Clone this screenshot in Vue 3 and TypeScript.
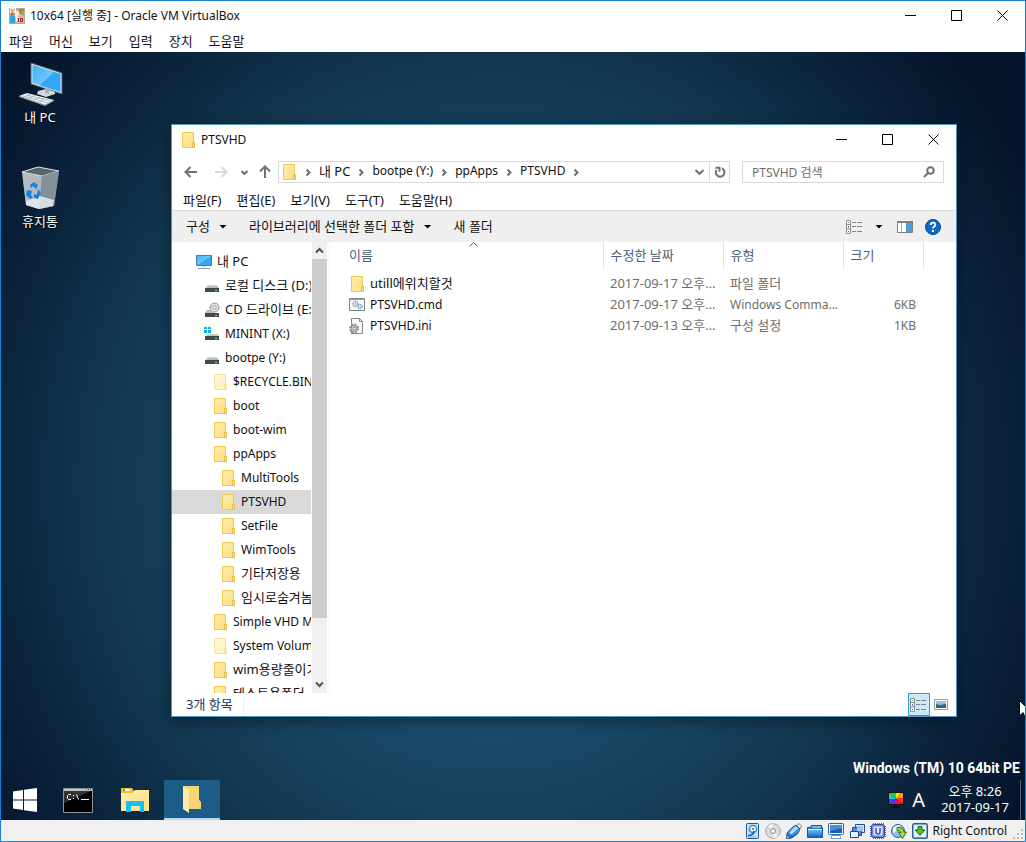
<script setup lang="ts">
import { ref } from 'vue'

interface TreeItem {
  name: string
  icon: string
  level: number
}

interface FileItem {
  name: string
  icon: string
  date: string
  kind: string
  size: string
}

const machineMenu = ['파일', '머신', '보기', '입력', '장치', '도움말']
const explorerMenu = ['파일(F)', '편집(E)', '보기(V)', '도구(T)', '도움말(H)']
const crumbs = ['내 PC', 'bootpe (Y:)', 'ppApps', 'PTSVHD']

const tree: TreeItem[] = [
  { name: '내 PC', icon: 'pc', level: 0 },
  { name: '로컬 디스크 (D:)', icon: 'drive', level: 1 },
  { name: 'CD 드라이브 (E:)', icon: 'cd', level: 1 },
  { name: 'MININT (X:)', icon: 'sysdrive', level: 1 },
  { name: 'bootpe (Y:)', icon: 'drive', level: 1 },
  { name: '$RECYCLE.BIN', icon: 'folder-dim', level: 2 },
  { name: 'boot', icon: 'folder', level: 2 },
  { name: 'boot-wim', icon: 'folder', level: 2 },
  { name: 'ppApps', icon: 'folder', level: 2 },
  { name: 'MultiTools', icon: 'folder', level: 3 },
  { name: 'PTSVHD', icon: 'folder', level: 3 },
  { name: 'SetFile', icon: 'folder', level: 3 },
  { name: 'WimTools', icon: 'folder', level: 3 },
  { name: '기타저장용', icon: 'folder', level: 3 },
  { name: '임시로숨겨놈', icon: 'folder', level: 3 },
  { name: 'Simple VHD Manager', icon: 'folder', level: 2 },
  { name: 'System Volume Information', icon: 'folder-dim', level: 2 },
  { name: 'wim용량줄이기', icon: 'folder', level: 2 },
  { name: '테스트용폴더', icon: 'folder', level: 2 },
]

const files: FileItem[] = [
  { name: 'utill에위치할것', icon: 'folder', date: '2017-09-17 오후 8:20', kind: '파일 폴더', size: '' },
  { name: 'PTSVHD.cmd', icon: 'cmdfile', date: '2017-09-17 오후 8:18', kind: 'Windows Command Script', size: '6KB' },
  { name: 'PTSVHD.ini', icon: 'inifile', date: '2017-09-13 오후 5:02', kind: '구성 설정', size: '1KB' },
]

const devices = ['hdd', 'optical', 'usb', 'shared', 'display', 'windows', 'cpu', 'mouse', 'key']

const selected = ref('PTSVHD')
const query = ref('')

const hasHangul = (text: string): boolean => /[가-힣]/.test(text)
</script>

<template>
  <div class="machine">
    <svg class="defs" width="0" height="0" aria-hidden="true">
      <defs>
        <linearGradient id="g-folder" x1="0" y1="0" x2="1" y2="1">
          <stop offset="0" stop-color="#ffeeb0" /><stop offset="1" stop-color="#ffdf80" />
        </linearGradient>
        <linearGradient id="g-screen" x1="0" y1="0" x2="1" y2="1">
          <stop offset="0" stop-color="#3cb4f4" /><stop offset="0.5" stop-color="#6cc6fb" /><stop offset="0.52" stop-color="#2fa6f2" /><stop offset="1" stop-color="#37abff" />
        </linearGradient>
        <linearGradient id="g-blue" x1="0" y1="0" x2="0" y2="1">
          <stop offset="0" stop-color="#7cc4f4" /><stop offset="1" stop-color="#1667c4" />
        </linearGradient>
        <linearGradient id="g-drive" x1="0" y1="0" x2="0" y2="1">
          <stop offset="0" stop-color="#d5d8da" /><stop offset="1" stop-color="#a4a8ab" />
        </linearGradient>
        <linearGradient id="g-bin" x1="0" y1="0" x2="1" y2="0">
          <stop offset="0" stop-color="#aeb5bb" /><stop offset="0.6" stop-color="#98a1a9" /><stop offset="1" stop-color="#6f7a84" />
        </linearGradient>
        <symbol id="folder" viewBox="0 0 16 16">
          <path d="M2.5.5h11v15h-11z" fill="url(#g-folder)" stroke="#ecc752" />
          <path d="M12.5 10.5h2v5h-2z" fill="#ffe38c" stroke="#e5bb3c" />
        </symbol>
        <symbol id="folder-dim" viewBox="0 0 16 16">
          <g opacity=".5">
            <path d="M2.5.5h11v15h-11z" fill="url(#g-folder)" stroke="#ecc752" />
            <path d="M12.5 10.5h2v5h-2z" fill="#ffe38c" stroke="#e5bb3c" />
          </g>
        </symbol>
        <symbol id="pc" viewBox="0 0 16 16">
          <path d="M.5 1.5h15v10H.5z" fill="url(#g-screen)" stroke="#3f7fae" />
          <path d="M6 12h4v1H6z" fill="#c5ccd1" /><path d="M2 14h12v1H2z" fill="#8899a6" />
        </symbol>
        <symbol id="drive" viewBox="0 0 16 16">
          <path d="M4 7h9l2 4H1z" fill="url(#g-drive)" />
          <rect x="1" y="10" width="14" height="4" fill="#42484c" /><rect x="11" y="12" width="2" height="1" fill="#5dff68" />
        </symbol>
        <symbol id="cd" viewBox="0 0 16 16">
          <circle cx="10.500" cy="5.500" r="4.500" fill="#dfe1e2" stroke="#8f9497" /><circle cx="10.500" cy="5.500" r="1.700" fill="#fff" stroke="#8e9295" />
          <path d="M3 8h4l4 3H1z" fill="#b9bcbe" /><rect x="1" y="11" width="14" height="4" fill="#42484c" /><rect x="11" y="13" width="2" height="1" fill="#5dff68" />
        </symbol>
        <symbol id="sysdrive" viewBox="0 0 16 16">
          <path d="M0 1h3v2H0zM4 1h3v2H4zM0 4h3v3H0zM4 4h3v3H4z" fill="#00b3ef" />
          <path d="M4 8h10l1 3H1z" fill="url(#g-drive)" /><rect x="1" y="10" width="14" height="4" fill="#42484c" /><rect x="11" y="12" width="2" height="1" fill="#5dff68" />
        </symbol>
        <symbol id="cmdfile" viewBox="0 0 16 16">
          <path d="M.5 1.500h15v12H.5z" fill="#f7f8f9" stroke="#7b8288" /><path d="M1 2h14v1H1z" fill="#9aa1a6" />
          <circle cx="6.500" cy="7" r="2.500" fill="none" stroke="#8a949c" stroke-width="1.500" stroke-dasharray="1.200 .6" /><circle cx="6.500" cy="7" r="1" fill="#a3acb3" />
          <circle cx="10.800" cy="9.500" r="2" fill="#d7ebf8" stroke="#71a8cf" stroke-width="1.500" stroke-dasharray="1.200 .5" />
        </symbol>
        <symbol id="inifile" viewBox="0 0 16 16">
          <path d="M2.500.5h8l3 3v12h-11z" fill="#fafafa" stroke="#85898c" /><path d="M10.500.5v3h3" fill="none" stroke="#85898c" />
          <circle cx="5" cy="10.500" r="4" fill="none" stroke="#858c92" stroke-width="2" stroke-dasharray="1.800 1.340" /><circle cx="5" cy="10.500" r="3" fill="#dcdfe1" stroke="#858c92" /><circle cx="5" cy="10.500" r="1.300" fill="#fff" stroke="#858c92" />
        </symbol>
        <symbol id="details" viewBox="0 0 18 14">
          <path d="M.5.5h4v13h-4zM.5 4.500h4M.5 9h4" fill="#fff" stroke="#8c8c8c" />
          <path d="M2 2h1v1H2z" fill="#4b9a4f" /><path d="M2 6h1v2H2z" fill="#418ad6" /><path d="M2 11h1v1H2z" fill="#d43b3b" />
          <path d="M6 2.500h4m1 0h5M6 6.500h4m1 0h5M6 11.500h4m1 0h5" stroke="#858585" />
        </symbol>
        <symbol id="hdd" viewBox="0 0 16 16">
          <rect x="2.500" y=".5" width="12" height="15" rx="1" fill="#c4e1fa" stroke="#205b95" /><circle cx="9" cy="6" r="3.500" fill="#fff" stroke="#3d8bd1" stroke-width="1.500" /><circle cx="9" cy="6" r="1" fill="#1e5fa8" />
          <path d="M4 13l5-2 1-3" fill="none" stroke="#185da8" stroke-width="1.700" /><path d="M4 14h8" stroke="#7bb5e8" />
        </symbol>
        <symbol id="optical" viewBox="0 0 16 16">
          <circle cx="8" cy="8" r="7.300" fill="#dcdcdc" stroke="#a5a5a5" /><path d="M8 8L3 3A7 7 0 0 1 8 1zM8 8l5 5a7 7 0 0 1-5 2z" fill="#f4f4f4" /><circle cx="8" cy="8" r="2.600" fill="#ddd" stroke="#9b9b9b" /><circle cx="8" cy="8" r="1" fill="#fff" />
        </symbol>
        <symbol id="usb" viewBox="0 0 16 16">
          <path d="M10 4l3-3.500L15.500 3 13 7z" fill="#fff" stroke="#6d8094" /><path d="M5.500 5l4.500-3 4 4-2.500 5-6 4-4.500.5L1 10z" fill="url(#g-blue)" stroke="#1c4f8e" /><path d="M3.500 9.500l6-6 2 2-6 6z" fill="#b5dffc" /><path d="M1 12l3 3-3.500.5z" fill="#fff" stroke="#1c4f8e" />
        </symbol>
        <symbol id="shared" viewBox="0 0 16 16">
          <path d="M.5 14.500v-10h2.500l1.500-2h10v2h1v10z" fill="#2d82ce" stroke="#175a9f" /><path d="M1 6h14v8H1z" fill="url(#g-blue)" /><path d="M1 6.500h14M5 4h9" stroke="#d3ecff" />
        </symbol>
        <symbol id="display" viewBox="0 0 16 16">
          <rect x=".5" y=".5" width="15" height="11" rx="1" fill="#e9f4ff" stroke="#2767a5" /><path d="M2 2h12v8H2z" fill="#1f62b2" /><path d="M2 2h12v3L2 8z" fill="#4690dc" /><path d="M4 12.500h8l1 3H3z" fill="#fff" stroke="#8296a9" />
        </symbol>
        <symbol id="windows" viewBox="0 0 16 16">
          <path d="M6.500 1.500h9v8h-9z" fill="#d7e5fb" stroke="#1f4f9b" /><path d="M3.500 4.500h9v8h-9z" fill="#5a86d4" stroke="#1f4f9b" /><path d="M1.500 8.500h8v6h-8z" fill="#e8f2ff" stroke="#1f4f9b" /><path d="M8 3h6v5H8z" fill="#a9c5f4" />
        </symbol>
        <symbol id="cpu" viewBox="0 0 16 16">
          <path d="M3 .7h11M3 15.300h11M.7 3v11M15.300 3v11" stroke="#4b62b8" stroke-width="1.500" stroke-dasharray="1 1" /><rect x="1.500" y="1.500" width="13" height="13" rx="2" fill="#6f86d8" stroke="#31479d" /><rect x="3.500" y="3.500" width="9" height="9" fill="#dfe6ff" /><path d="M6 5v4q0 2 2 2t2-2V5" fill="none" stroke="#3850ad" stroke-width="1.500" />
        </symbol>
        <symbol id="mouse" viewBox="0 0 16 16">
          <circle cx="7" cy="8" r="6.500" fill="#8fbdec" stroke="#2b649f" /><path d="M2 5q4-4 8-2L7 7 2 10z" fill="#e9f5ff" /><path d="M6 4.500q6.500-.5 7 4.500h2.500L11.500 15.500 7.500 9.500H10Q9 7 6 7.500z" fill="#a4d83c" stroke="#2f721d" />
        </symbol>
        <symbol id="key" viewBox="0 0 16 16">
          <rect x=".7" y=".7" width="14.600" height="14.600" rx="1.500" fill="#dcebfa" stroke="#245f96" stroke-width="1.400" /><rect x="3" y="3" width="10" height="10" fill="#f5faff" /><path d="M6 3.500h4V7h3l-5 5.500L3 7h3z" fill="#4fc127" stroke="#176b12" />
        </symbol>
      </defs>
    </svg>

    <header class="machine-title">
      <svg class="app-icon" viewBox="0 0 16 16" aria-hidden="true">
        <path d="M0 0h16v16H0z" fill="#b6aa93" /><path d="M1 0h6v5H1z" fill="#f8f5e9" /><path d="M8 1h7v5H8z" fill="#e5652b" /><path d="M1 8h5v7H1z" fill="#37a6de" /><path d="M6 6l3-5 2 6-4 8z" fill="#f2f2f2" /><path d="M2 5l4 1-4 2z" fill="#e8502d" /><path d="M9 7h6v8H8z" fill="#d8b8a2" /><path d="M12 2l3 1v5l-3-2z" fill="#7dbf42" /><path d="M9.500 10v4M11.500 10.500h2v3h-2z" fill="none" stroke="#a3202a" />
        <path d="M1.500 1.500l2 1 2-1M2 4h3" fill="none" stroke="#777" />
      </svg>
      <span>10x64 [실행 중] - Oracle VM VirtualBox</span>
      <div class="caption-buttons">
        <button type="button" aria-label="최소화"><svg viewBox="0 0 11 11"><path d="M0 5.500h11" /></svg></button>
        <button type="button" aria-label="최대화"><svg viewBox="0 0 11 11"><path d="M.5.5h10v10H.5z" /></svg></button>
        <button type="button" aria-label="닫기"><svg viewBox="0 0 11 11"><path d="M.5.5l10 10M10.500.5l-10 10" /></svg></button>
      </div>
    </header>
    <nav class="machine-menu ko">
      <button v-for="item in machineMenu" :key="item" type="button">{{ item }}</button>
    </nav>

    <main class="desktop">
      <div class="shortcuts ko">
        <button type="button" class="shortcut">
          <svg viewBox="0 0 48 48" aria-hidden="true">
            <path d="M15 3l31 10v21L15 24z" fill="#d9e4ea" stroke="#50626e" /><path d="M16.500 5l28 9v18l-28-9z" fill="url(#g-screen)" /><path d="M22 31l8-2 9 3v2l-9 3-9-3z" fill="#d4dade" /><path d="M29 27l4 1v6l-4-1z" fill="#a9b2b8" /><path d="M3 36l8-3 27 7-9 5z" fill="#edf1f3" /><path d="M3 36l26 9 9-5v1l-9 5L3 37z" fill="#9da7ae" /><path d="M7 36l25 7M10 35l25 6M14 34l-5 3M19 35l-6 4M24 37l-6 3M29 38l-6 4" stroke="#b3bdc3" fill="none" />
          </svg>
          <span>내 PC</span>
        </button>
        <button type="button" class="shortcut">
          <svg viewBox="0 0 48 48" aria-hidden="true">
            <path d="M6 8l16-5 21 4-5 35-15 3-13-4z" fill="url(#g-bin)" /><path d="M6 8l16-5 21 4-17 5z" fill="#59646d" stroke="#dce2e6" /><path d="M6 8l20 4-3 33-13-4z" fill="#c0c6cb" opacity=".55" /><path d="M26 12l17-5-5 35-15 3z" fill="#848f98" /><path d="M10 37l14-5 14 4-1 6-14 3-13-4z" fill="#edf0f2" opacity=".8" />
            <path d="M14 21l4-3 4 3-2 4-3-3-2 2zM11 26l5 1-1 4 2 3-3 1-4-4zM22 25l3 4-3 6-4-1v-4l3 1z" fill="#1681dc" />
          </svg>
          <span>휴지통</span>
        </button>
      </div>

      <section class="explorer">
        <header class="explorer-title">
          <svg class="ico"><use href="#folder" /></svg>
          <span>PTSVHD</span>
          <div class="caption-buttons">
            <button type="button" aria-label="최소화"><svg viewBox="0 0 11 11"><path d="M0 5.500h11" /></svg></button>
            <button type="button" aria-label="최대화"><svg viewBox="0 0 11 11"><path d="M.5.5h10v10H.5z" /></svg></button>
            <button type="button" aria-label="닫기"><svg viewBox="0 0 11 11"><path d="M.5.5l10 10M10.500.5l-10 10" /></svg></button>
          </div>
        </header>

        <div class="nav-row">
          <button type="button" class="nav wide" aria-label="뒤로"><svg width="14" height="12" viewBox="0 0 14 12"><path d="M13 6H2M6.500 1L1.500 6l5 5" /></svg></button>
          <button type="button" class="nav wide off" aria-label="앞으로"><svg width="14" height="12" viewBox="0 0 14 12"><path d="M1 6h11M7.500 1l5 5-5 5" /></svg></button>
          <button type="button" class="nav small" aria-label="최근 위치"><svg width="7" height="5" viewBox="0 0 7 5"><path d="M.5 1l3 3 3-3" /></svg></button>
          <button type="button" class="nav up" aria-label="위로"><svg width="12" height="14" viewBox="0 0 12 14"><path d="M6 13V2M1 6.500l5-5 5 5" /></svg></button>
          <div class="address">
            <svg class="ico"><use href="#folder" /></svg>
            <template v-for="crumb in crumbs" :key="crumb">
              <svg class="sep" viewBox="0 0 22 9"><path d="M9.500 1.500l3 3-3 3" /></svg>
              <button type="button" class="crumb" :class="{ ko: hasHangul(crumb) }">{{ crumb }}</button>
            </template>
            <svg class="sep" viewBox="0 0 22 9"><path d="M9.500 1.500l3 3-3 3" /></svg>
            <button type="button" class="drop" aria-label="이전 위치"><svg width="9" height="6" viewBox="0 0 9 6"><path d="M.5 1l4 4 4-4" /></svg></button>
          </div>
          <button type="button" class="refresh" aria-label="새로 고침"><svg width="12" height="12" viewBox="0 0 12 12"><path d="M8 2.500A4.300 4.300 0 1 1 2.500 4M1.500 1.800h4v4" /></svg></button>
          <label class="search">
            <input v-model="query" type="search" placeholder="PTSVHD 검색" aria-label="PTSVHD 검색" />
            <svg width="12" height="12" viewBox="0 0 12 12"><circle cx="7.500" cy="4.500" r="3.300" /><path d="M5 7L1 11" /></svg>
          </label>
        </div>

        <nav class="explorer-menu ko">
          <button v-for="item in explorerMenu" :key="item" type="button">{{ item }}</button>
        </nav>

        <div class="toolbar ko">
          <button type="button"><span>구성</span><i class="caret" /></button>
          <button type="button"><span>라이브러리에 선택한 폴더 포함</span><i class="caret" /></button>
          <button type="button"><span>새 폴더</span></button>
          <div class="tools">
            <button type="button" class="view-menu" aria-label="보기 변경"><svg width="18" height="14"><use href="#details" /></svg><i class="caret" /></button>
            <button type="button" aria-label="미리 보기 창"><svg width="16" height="12" viewBox="0 0 16 12"><path d="M.5.5h15v11H.5z" fill="#fff" stroke="#808080" /><path d="M0 0h16v2H0z" fill="#808080" /><path d="M9 2h6v9H9z" fill="#43a0e5" /><path d="M4.500 2v9" stroke="#aaa" /></svg></button>
            <button type="button" aria-label="도움말"><svg width="16" height="16" viewBox="0 0 16 16"><circle cx="8" cy="8" r="7.500" fill="#0d68c6" stroke="#06458f" /><path d="M5.800 6q0-2.300 2.200-2.300T10.200 6q0 1-1.200 1.700T8 9.500" fill="none" stroke="#fff" stroke-width="1.800" /><path d="M7 11h2v2H7z" fill="#fff" /></svg></button>
          </div>
        </div>

        <div class="panes">
          <ul class="tree">
            <li v-for="item in tree" :key="item.name">
              <button
                type="button"
                :class="['level-' + item.level, { ko: hasHangul(item.name), selected: selected === item.name }]"
                @click="selected = item.name"
              >
                <svg class="ico"><use :href="'#' + item.icon" /></svg><span>{{ item.name }}</span>
              </button>
            </li>
          </ul>
          <div class="scrollbar" aria-hidden="true">
            <svg viewBox="0 0 9 6"><path d="M1 5l3.500-3.500L8 5" /></svg>
            <div class="track"><div class="thumb" /></div>
            <svg viewBox="0 0 9 6"><path d="M1 1l3.500 3.500L8 1" /></svg>
          </div>
          <div class="list">
            <table>
              <colgroup><col class="c-name" /><col class="c-mid" /><col class="c-mid" /><col class="c-size" /><col /></colgroup>
              <thead class="ko">
                <tr>
                  <th>이름<svg class="sort" viewBox="0 0 9 5"><path d="M.5 4.500l4-4 4 4" /></svg></th>
                  <th>수정한 날짜</th><th>유형</th><th>크기</th><td />
                </tr>
              </thead>
              <tbody>
                <tr v-for="file in files" :key="file.name">
                  <td class="name"><div><svg class="ico"><use :href="'#' + file.icon" /></svg><span :class="{ ko: hasHangul(file.name) }">{{ file.name }}</span></div></td>
                  <td class="ko">{{ file.date }}</td>
                  <td class="kind" :class="{ ko: hasHangul(file.kind) }">{{ file.kind }}</td>
                  <td class="size">{{ file.size }}</td>
                  <td />
                </tr>
              </tbody>
            </table>
          </div>
        </div>

        <footer class="explorer-status">
          <span class="ko count">3개 항목</span>
          <button type="button" class="view on" aria-label="자세히"><svg width="18" height="14"><use href="#details" /></svg></button>
          <button type="button" class="view" aria-label="큰 아이콘"><svg width="14" height="11" viewBox="0 0 14 11"><path d="M.5.5h13v10H.5z" fill="#fff" stroke="#999" /><path d="M2 2h10v7H2z" fill="#8fc1ea" /><path d="M2 5l4 1 6-1v4H2z" fill="#356b56" /><path d="M5 8l7-2v3H5z" fill="#2f62a0" /></svg></button>
        </footer>
      </section>

      <svg class="pointer" width="12" height="19" viewBox="0 0 12 19" aria-hidden="true"><path d="M.5.5v15.500L4 12.500 6.500 18.500 9 17.500 6.500 11.500h5z" fill="#fff" stroke="#000" /></svg>

      <p class="watermark">Windows (TM) 10 64bit PE</p>

      <div class="taskbar">
        <button type="button" class="start" aria-label="시작"><svg width="24" height="24" viewBox="0 0 24 24" fill="#fff"><path d="M0 3.500L10 2v9.500H0zM11 1.800L24 0v11.500H11zM0 12.500h10V22L0 20.500zM11 12.500h13V24l-13-1.800z" /></svg></button>
        <button type="button" aria-label="명령 프롬프트">
          <svg width="30" height="25" viewBox="0 0 30 25"><path d="M.5.5h29v24H.5z" fill="#000" stroke="#8e9494" /><path d="M1 1h28v2H1z" fill="#c0c7c7" /><path d="M1 3h27L1 15z" fill="#333" /><path d="M23 1.500h1m1 0h1m1 0h1" stroke="#2c4c7c" /><path d="M8 6.500H5.500l-1 1v3l1 1H8M10.500 7v1m0 2v1M13.500 6.500l2 5M18 11.500h8" fill="none" stroke="#fff" /></svg>
        </button>
        <button type="button" aria-label="파일 탐색기">
          <svg width="28" height="24" viewBox="0 0 28 24"><path d="M0 0h11l2 3h15v20H0z" fill="#f3bf36" /><path d="M0 5h12l2-3h14v21H0z" fill="url(#g-folder)" /><path d="M2 1h7v2H2z" fill="#fff" /><path d="M2 1h2v2H2z" fill="#36ad68" /><path d="M5 24V13h18v11h-4v-6h-9v6z" fill="#17bff5" /></svg>
        </button>
        <button type="button" class="active" aria-label="PTSVHD">
          <svg width="20" height="28" viewBox="0 0 20 28"><path d="M1 1h16v14l2 2v7H4z" fill="#f5cf69" /><path d="M1 1l6 4v23l-6-4z" fill="#ffe9a5" /><path d="M7 2h10v13l2 2v7H7z" fill="#f7d476" /></svg>
        </button>
        <div class="tray">
          <svg width="16" height="16" viewBox="0 0 16 16" aria-hidden="true"><path d="M0 0h16v13H0z" fill="#111" /><path d="M8 7L1 1h7z" fill="#18d846" /><path d="M8 7V1h5z" fill="#ffe400" /><path d="M8 7l5-6h2v5z" fill="#ff9a00" /><path d="M8 7l7-1v6z" fill="#ff3a14" /><path d="M8 7l7 5H8z" fill="#f5006b" /><path d="M8 7v5H2z" fill="#9a18e8" /><path d="M8 7l-6 5H1V7z" fill="#1d52ff" /><path d="M8 7H1V1z" fill="#12cfd8" /><path d="M6 13h4v1h2v2H4v-2h2z" fill="#111" /></svg>
          <span class="ime">A</span>
          <div class="clock"><span>오후 8:26</span><span>2017-09-17</span></div>
        </div>
      </div>
    </main>

    <footer class="machine-status">
      <svg v-for="device in devices" :key="device" class="ico"><use :href="'#' + device" /></svg>
      <span>Right Control</span>
      <svg class="grip" viewBox="0 0 12 12" aria-hidden="true"><path d="M8 0h2v2H8zM4 4h2v2H4zM8 4h2v2H8zM0 8h2v2H0zM4 8h2v2H4zM8 8h2v2H8z" fill="#b8b8b8" /></svg>
    </footer>
  </div>
</template>

<style>
body {
  margin: 0;
}
</style>

<style scoped>
* {
  box-sizing: border-box;
}
.machine {
  display: flex;
  flex-direction: column;
  height: 100vh;
  border: 1px solid #1a7fd4;
  background: #fff;
  color: #111;
  font-family: "Noto Sans", "Noto Sans CJK KR", sans-serif;
  font-size: 12px;
  line-height: 16px;
  overflow: hidden;
}
.defs {
  position: absolute;
}
button {
  margin: 0;
  padding: 0;
  border: 0;
  background: none;
  color: inherit;
  font-family: inherit;
  font-size: inherit;
  line-height: inherit;
  white-space: nowrap;
}
.ko {
  font-size: 13px;
}
svg {
  display: block;
  flex: none;
}
.ico {
  width: 16px;
  height: 16px;
}
.machine-title {
  display: flex;
  flex: none;
  align-items: center;
  height: 29px;
  padding-left: 8px;
}
.app-icon {
  width: 16px;
  height: 16px;
  margin-right: 5px;
}
.caption-buttons {
  display: flex;
  margin-left: auto;
}
.caption-buttons button {
  display: grid;
  place-items: center;
  width: 46px;
  height: 28px;
}
.caption-buttons svg {
  width: 11px;
  height: 11px;
  fill: none;
  stroke: #000;
}
.machine-menu {
  display: flex;
  flex: none;
  gap: 16px;
  height: 22px;
  padding-left: 8px;
}

.desktop {
  position: relative;
  display: flex;
  flex: 1;
  flex-direction: column;
  min-height: 0;
  overflow: hidden;
  background: radial-gradient(ellipse 60% 86% at 48% 56%, #1f587c 0%, #1b4c6c 35%, #12364f 65%, #0a213a 85%, #04142a 100%);
}
.shortcuts {
  display: flex;
  flex: 1;
  flex-direction: column;
  align-items: flex-start;
  gap: 30px;
  padding-top: 8px;
}
.shortcut {
  display: flex;
  flex-direction: column;
  align-items: center;
  gap: 1px;
  width: 78px;
  height: 74px;
  color: #fff;
  text-shadow: 1px 1px 2px #000;
}
.shortcut svg {
  width: 48px;
  height: 48px;
}

.explorer {
  position: absolute;
  inset: 72px 68px 103px 170px;
  display: flex;
  flex-direction: column;
  border: 1px solid #4e96c2;
  background: #fff;
  box-shadow: 0 4px 14px rgba(0, 0, 0, 0.4);
}
.explorer-title {
  display: flex;
  flex: none;
  align-items: center;
  height: 29px;
  padding-left: 8px;
}
.explorer-title span {
  margin-left: 5px;
}
.nav-row {
  display: flex;
  flex: none;
  align-items: center;
  height: 36px;
  padding: 0 12px 0 4px;
}
.nav-row svg {
  fill: none;
  stroke: #707070;
  stroke-width: 2;
}
.nav-row .ico {
  stroke-width: 1;
  stroke: none;
}
.nav {
  display: grid;
  place-items: center;
  height: 24px;
}
.nav.wide {
  width: 30px;
}
.nav.small {
  width: 16px;
}
.nav.up {
  width: 26px;
}
.nav.off svg {
  stroke: #d8d8d8;
}
.address {
  display: flex;
  flex: 1;
  align-items: center;
  min-width: 0;
  height: 22px;
  padding-left: 2px;
  border: 1px solid #d9d9d9;
  overflow: hidden;
}
.address .sep {
  width: 22px;
  height: 9px;
}
.crumb {
  padding-bottom: 2px;
}
.address .drop {
  margin-left: auto;
  padding: 0 5px;
}
.refresh {
  display: grid;
  place-items: center;
  width: 20px;
  height: 22px;
  border: 1px solid #d9d9d9;
  border-left: 0;
}
.search {
  display: flex;
  align-items: center;
  width: 202px;
  height: 22px;
  margin-left: 12px;
  padding: 0 8px 0 9px;
  border: 1px solid #d9d9d9;
}
.search input {
  flex: 1;
  min-width: 0;
  padding: 0;
  border: 0;
  outline: 0;
  background: none;
  font-family: inherit;
  font-size: 12px;
}
.search input::placeholder {
  color: #6d6d6d;
}
.explorer-menu {
  display: flex;
  flex: none;
  align-items: center;
  gap: 15px;
  height: 20px;
  padding-left: 11px;
}
.toolbar {
  display: flex;
  flex: none;
  align-items: center;
  gap: 22px;
  height: 32px;
  padding: 0 15px 0 14px;
  border-top: 1px solid #d9d9d9;
  background: #efefef;
}
.toolbar button {
  display: flex;
  align-items: center;
  gap: 9px;
}
.toolbar span {
  padding-bottom: 2px;
}
.caret {
  width: 8px;
  height: 4px;
  background: #000;
  clip-path: polygon(0 0, 100% 0, 50% 100%);
}
.tools {
  display: flex;
  align-items: center;
  gap: 12px;
  margin-left: auto;
}
.toolbar .view-menu {
  gap: 11px;
  margin-right: 2px;
}

.panes {
  display: flex;
  flex: 1;
  min-height: 0;
}
.tree {
  width: 139px;
  margin: 0;
  padding: 8px 0 0;
  list-style: none;
  overflow: hidden;
}
.tree button {
  display: flex;
  align-items: center;
  gap: 5px;
  width: 100%;
  height: 24px;
  overflow: hidden;
}
.tree .ko span {
  padding-bottom: 2px;
}
.tree .selected {
  background: #d9d9d9;
}
.level-0 {
  padding-left: 24px;
}
.level-1 {
  padding-left: 32px;
}
.level-2 {
  padding-left: 40px;
}
.level-3 {
  padding-left: 48px;
}
.scrollbar {
  display: flex;
  flex-direction: column;
  width: 17px;
  padding: 0 1px;
  background: linear-gradient(to right, #fff 1px, #f0f0f0 1px, #f0f0f0 16px, #fff 16px);
}
.scrollbar svg {
  width: 9px;
  height: 17px;
  margin: 0 auto;
  fill: none;
  stroke: #505050;
  stroke-width: 2;
}
.track {
  flex: 1;
}
.thumb {
  height: 86%;
  background: #cdcdcd;
}
.list {
  flex: 1;
  min-width: 0;
  margin-left: 1px;
  border-left: 1px solid #f4f4f4;
}
table {
  width: 100%;
  table-layout: fixed;
  border-collapse: collapse;
}
.c-name {
  width: 273px;
}
.c-mid {
  width: 120px;
}
.c-size {
  width: 80px;
}
th {
  position: relative;
  height: 26px;
  padding: 0 0 0 7px;
  border-right: 1px solid #e2e2e2;
  color: #4c607a;
  font-weight: 400;
  text-align: left;
}
th:first-child {
  padding-left: 19px;
}
.sort {
  position: absolute;
  top: 0;
  left: 51%;
  width: 9px;
  height: 5px;
  fill: none;
  stroke: #666;
}
tbody::before {
  content: "";
  display: block;
  height: 5px;
}
tbody td {
  height: 21px;
  padding: 0 7px;
  color: #6d6d6d;
  overflow: hidden;
  text-overflow: ellipsis;
  white-space: nowrap;
}
tbody td.ko {
  padding-bottom: 2px;
}
tbody .kind {
  padding-right: 0;
}
tbody .name {
  padding-left: 19px;
  color: #111;
}
.name div {
  display: flex;
  align-items: center;
  gap: 5px;
}
.name .ko {
  padding-bottom: 2px;
}
tbody .size {
  text-align: right;
}
.explorer-status {
  display: flex;
  flex: none;
  align-items: center;
  height: 23px;
  padding: 0 4px 0 14px;
}
.count {
  margin-right: auto;
  padding: 0 10px 2px 0;
  border-right: 1px solid #eee;
  color: #1e395b;
}
.view {
  display: grid;
  place-items: center;
  width: 22px;
  height: 23px;
}
.view.on {
  border: 1px solid #26a0da;
  background: #cbe8f6;
}
.pointer {
  position: absolute;
  top: 648px;
  right: -6px;
}

.watermark {
  flex: none;
  margin: 0 5px 3px 0;
  color: #fff;
  font-family: Roboto, sans-serif;
  font-size: 14px;
  font-weight: 700;
  line-height: 18px;
  text-align: right;
}
.taskbar {
  display: flex;
  flex: none;
  gap: 1px;
  height: 40px;
}
.taskbar button {
  display: grid;
  place-items: center;
  width: 56px;
}
.taskbar .start {
  width: 48px;
}
.taskbar .active {
  border-bottom: 2px solid #a8d8fa;
  background: #1d5c86;
}
.tray {
  display: flex;
  align-items: center;
  margin-left: auto;
  margin-right: 4px;
  padding-right: 11px;
  border-right: 1px solid #51616f;
  color: #fff;
}
.ime {
  margin: 0 16px 0 8px;
  font-size: 20px;
}
.clock {
  display: flex;
  flex-direction: column;
  align-items: center;
  padding-bottom: 2px;
  font-size: 13px;
}
.machine-status {
  display: flex;
  flex: none;
  align-items: center;
  justify-content: flex-end;
  gap: 5px;
  height: 21px;
  background: #f0f0f0;
}
.grip {
  align-self: flex-end;
  width: 12px;
  height: 12px;
  margin-left: 1px;
}
</style>
